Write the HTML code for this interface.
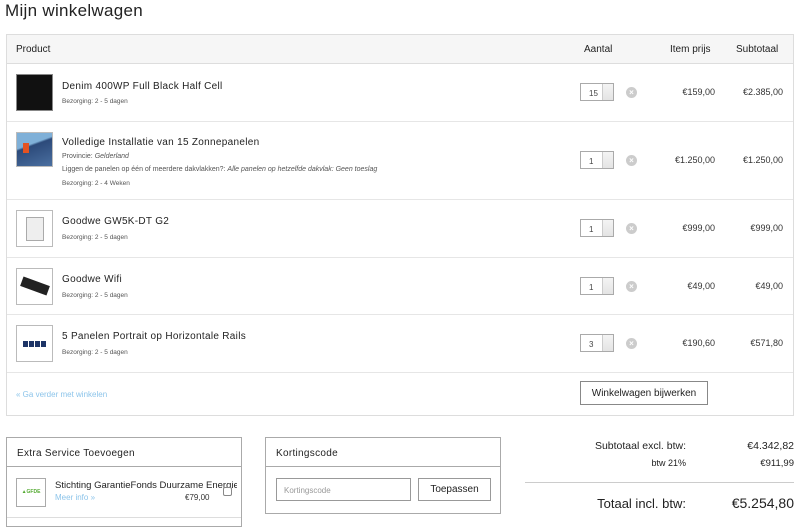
<!DOCTYPE html>
<html><head><meta charset="utf-8"><style>
*{box-sizing:border-box;margin:0;padding:0}
body{width:800px;height:524px;overflow:hidden;background:#fff;font-family:"Liberation Sans",sans-serif;color:#222;position:relative}
.a{position:absolute}
h1{position:absolute;left:5px;top:1px;font-size:17px;font-weight:normal;letter-spacing:.3px}
.tbl{left:6px;top:34px;width:788px;height:382px;border:1px solid #ddd}
.hd{left:0;top:0;width:786px;height:29px;background:#f6f6f6;border-bottom:1px solid #ddd;font-size:10px}
.row{left:0;width:786px;border-bottom:1px solid #e6e6e6}
.th{position:absolute;left:9px;width:37px;height:37px;border:1px solid #bbb;background:#fff}
.nm{position:absolute;left:55px;font-size:10px;letter-spacing:.3px}
.sm{position:absolute;left:55px;font-size:6.5px;color:#555}
.qty{position:absolute;left:573px;width:34px;height:18px;border:1px solid #aaa;font-size:8px;color:#444;padding:5px 0 0 8px;background:#fff}
.qty:after{content:"";position:absolute;right:0;top:0;width:10px;height:16px;border-left:1px solid #ccc;background:linear-gradient(#f4f4f4,#e4e4e4)}
.x{position:absolute;left:619px;width:11px;height:11px;border-radius:50%;background:#ccc;color:#fff;font-size:8px;text-align:center;line-height:11px;font-weight:bold}
.p{position:absolute;font-size:9px;color:#333;text-align:right}
.box{border:1px solid #aaa;background:#fff}
.bh{position:absolute;left:0;top:0;right:0;height:29px;border-bottom:1px solid #aaa;font-size:10px;padding:10px 0 0 10px;letter-spacing:.3px}
.btn{display:flex;align-items:center;justify-content:center}
</style></head><body>
<h1>Mijn winkelwagen</h1>
<div class="a tbl">
 <div class="a hd"><span class="a" style="left:9px;top:9px">Product</span><span class="a" style="left:577px;top:9px">Aantal</span><span class="a" style="left:663px;top:9px">Item prijs</span><span class="a" style="left:729px;top:9px">Subtotaal</span></div>
 <div class="a row" style="top:29px;height:58px">
  <div class="th" style="top:10px;background:#111;border-color:#888"></div>
  <div class="nm" style="top:17px">Denim 400WP Full Black Half Cell</div>
  <div class="sm" style="top:34px">Bezorging: 2 - 5 dagen</div>
  <div class="qty" style="top:19px">15</div><div class="x" style="top:23px">×</div>
  <div class="p" style="right:78px;top:23px">€159,00</div><div class="p" style="right:10px;top:23px">€2.385,00</div>
 </div>
 <div class="a row" style="top:87px;height:78px">
  <div class="th" style="top:10px;height:35px;background:linear-gradient(160deg,#7fb0d8 0,#7fb0d8 35%,#2c4a7a 40%,#4a6fa0 100%)"><div style="position:absolute;left:6px;top:10px;width:6px;height:10px;background:#e55322"></div></div>
  <div class="nm" style="top:15px">Volledige Installatie van 15 Zonnepanelen</div>
  <div class="sm" style="top:31px;font-size:7px">Provincie: <i>Gelderland</i></div>
  <div class="sm" style="top:44px;font-size:7px;white-space:nowrap">Liggen de panelen op één of meerdere dakvlakken?: <i>Alle panelen op hetzelfde dakvlak: Geen toeslag</i></div>
  <div class="sm" style="top:58px">Bezorging: 2 - 4 Weken</div>
  <div class="qty" style="top:29px">1</div><div class="x" style="top:33px">×</div>
  <div class="p" style="right:78px;top:33px">€1.250,00</div><div class="p" style="right:10px;top:33px">€1.250,00</div>
 </div>
 <div class="a row" style="top:165px;height:58px">
  <div class="th" style="top:10px"><div style="position:absolute;left:9px;top:6px;width:18px;height:24px;background:#eee;border:1px solid #aaa"></div></div>
  <div class="nm" style="top:16px">Goodwe GW5K-DT G2</div>
  <div class="sm" style="top:34px">Bezorging: 2 - 5 dagen</div>
  <div class="qty" style="top:19px">1</div><div class="x" style="top:23px">×</div>
  <div class="p" style="right:78px;top:23px">€999,00</div><div class="p" style="right:10px;top:23px">€999,00</div>
 </div>
 <div class="a row" style="top:223px;height:57px">
  <div class="th" style="top:10px"><div style="position:absolute;left:4px;top:12px;width:28px;height:10px;background:#222;transform:rotate(20deg)"></div></div>
  <div class="nm" style="top:16px">Goodwe Wifi</div>
  <div class="sm" style="top:34px">Bezorging: 2 - 5 dagen</div>
  <div class="qty" style="top:19px">1</div><div class="x" style="top:23px">×</div>
  <div class="p" style="right:78px;top:23px">€49,00</div><div class="p" style="right:10px;top:23px">€49,00</div>
 </div>
 <div class="a row" style="top:280px;height:58px">
  <div class="th" style="top:10px"><div style="position:absolute;left:6px;top:15px;width:24px;height:6px;background:repeating-linear-gradient(90deg,#1d3466 0 5px,#fff 5px 6px)"></div></div>
  <div class="nm" style="top:16px">5 Panelen Portrait op Horizontale Rails</div>
  <div class="sm" style="top:34px">Bezorging: 2 - 5 dagen</div>
  <div class="qty" style="top:19px">3</div><div class="x" style="top:23px">×</div>
  <div class="p" style="right:78px;top:23px">€190,60</div><div class="p" style="right:10px;top:23px">€571,80</div>
 </div>
 <div class="a" style="left:9px;top:355px;font-size:8px;color:#8cc4ea">« Ga verder met winkelen</div>
 <div class="a btn" style="left:573px;top:346px;width:128px;height:24px;border:1px solid #888;font-size:10px">Winkelwagen bijwerken</div>
</div>
<div class="a box" style="left:6px;top:437px;width:236px;height:90px">
 <div class="bh">Extra Service Toevoegen</div>
 <div class="a" style="left:9px;top:40px;width:30px;height:29px;border:1px solid #aaa;font-size:5px;color:#5a3;text-align:center;line-height:27px;font-weight:bold">▲GFDE</div>
 <div class="a" style="left:48px;top:42px;font-size:9.5px;white-space:nowrap;width:182px;overflow:hidden">Stichting GarantieFonds Duurzame Energie</div>
 <div class="a" style="left:48px;top:55px;font-size:8px;color:#8cc4ea">Meer info »</div>
 <div class="a" style="left:178px;top:55px;font-size:8px;color:#333">€79,00</div>
 <div class="a" style="left:216px;top:49px;width:9px;height:9px;border:1px solid #888;border-radius:2px;background:#fff"></div>
 <div class="a" style="left:0;top:79px;width:234px;border-top:1px solid #ddd"></div>
</div>
<div class="a box" style="left:265px;top:437px;width:236px;height:77px">
 <div class="bh">Kortingscode</div>
 <div class="a" style="left:10px;top:40px;width:135px;height:23px;border:1px solid #999;font-size:8px;color:#999;padding:7px 0 0 7px">Kortingscode</div>
 <div class="a btn" style="left:152px;top:40px;width:73px;height:23px;border:1px solid #999;font-size:10px">Toepassen</div>
</div>
<div class="a" style="right:114px;top:440px;font-size:10.5px">Subtotaal excl. btw:</div>
<div class="a" style="right:6px;top:440px;font-size:10.5px">€4.342,82</div>
<div class="a" style="right:114px;top:458px;font-size:9px">btw 21%</div>
<div class="a" style="right:6px;top:458px;font-size:9.5px">€911,99</div>
<div class="a" style="left:525px;top:482px;width:269px;border-top:1px solid #ccc"></div>
<div class="a" style="right:114px;top:496px;font-size:13px">Totaal incl. btw:</div>
<div class="a" style="right:6px;top:495px;font-size:14px">€5.254,80</div>
</body></html>
